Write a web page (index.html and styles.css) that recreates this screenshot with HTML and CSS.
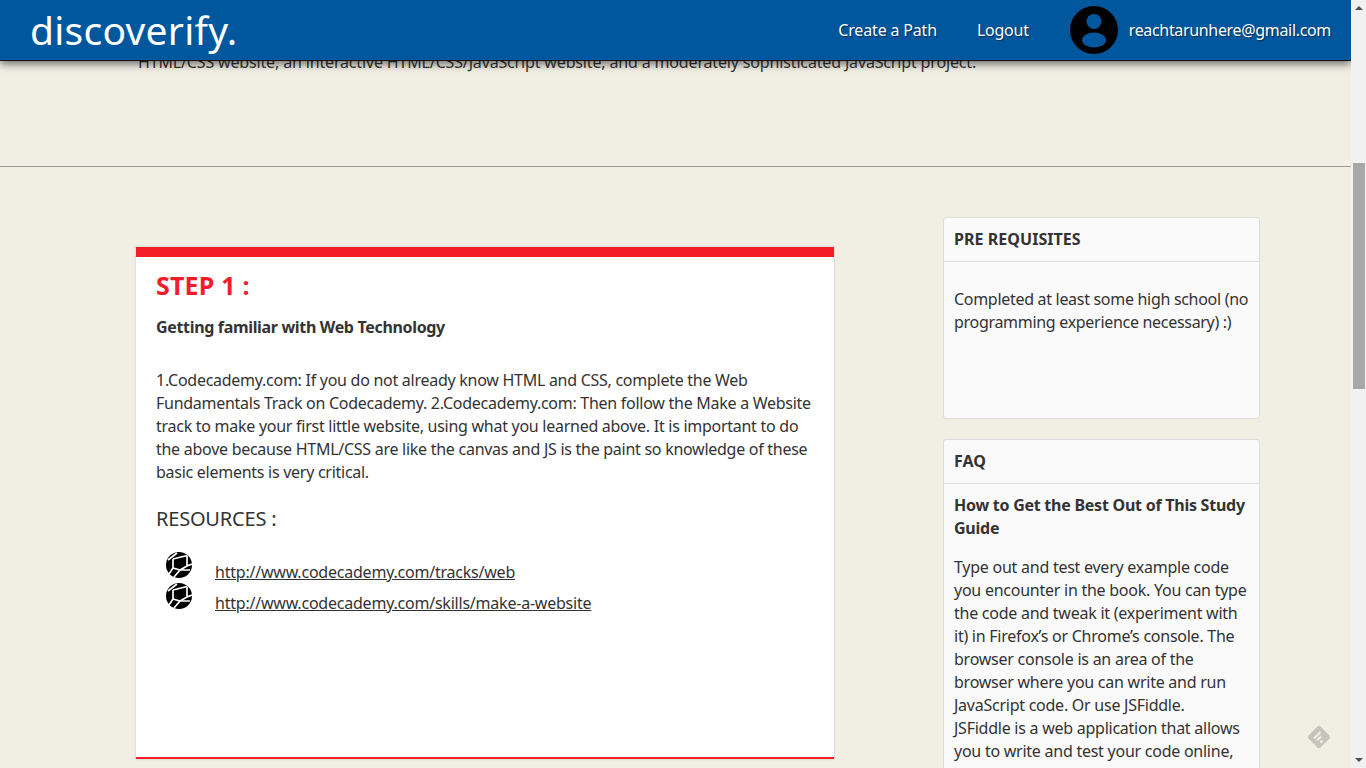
FILE: index.html
```html
<!DOCTYPE html>
<html lang="en">
<head>
<meta charset="utf-8">
<title>discoverify.</title>
<link rel="stylesheet" href="styles.css">
</head>
<body>
<div class="window">
  <div class="page">
    <header class="topbar">
      <a class="brand">discoverify.</a>
      <nav class="nav">
        <a class="nav-link nav-create">Create a Path</a>
        <a class="nav-link nav-logout">Logout</a>
        <span class="user">
          <svg class="avatar" viewBox="0 0 48 48"><circle cx="24" cy="24" r="24" fill="#000"/><circle cx="24" cy="15.500" r="7.500" fill="#00579e"/><ellipse cx="24" cy="34" rx="12" ry="7.500" fill="#00579e"/></svg>
          <span class="nav-link nav-email">reachtarunhere@gmail.com</span>
        </span>
      </nav>
    </header>

    <section class="intro">
      <p class="intro-text">HTML/CSS website, an interactive HTML/CSS/JavaScript website, and a moderately sophisticated JavaScript project.</p>
    </section>

    <div class="columns">
      <main class="step">
        <h2 class="step-title">STEP 1 :</h2>
        <h3 class="step-sub">Getting familiar with Web Technology</h3>
        <p class="step-body">1.Codecademy.com: If you do not already know HTML and CSS, complete the Web Fundamentals Track on Codecademy. 2.Codecademy.com: Then follow the Make a Website track to make your first little website, using what you learned above. It is important to do the above because HTML/CSS are like the canvas and JS is the paint so knowledge of these basic elements is very critical.</p>
        <h4 class="res-title">RESOURCES :</h4>
        <ul class="res-list">
          <li class="res-item">
            <svg class="globe" viewBox="0 0 26 26"><circle cx="13" cy="13" r="13" fill="#000"/><path d="M2 8 11 1M7 7 21 3.500M7 7 7 16 3 22M21 3.500 21 14M7 16 14 18 21 14 26 12M14 18 8 25M14 18 24 18" fill="none" stroke="#fff" stroke-width="1.700"/></svg>
            <a class="res-link">http://www.codecademy.com/tracks/web</a>
          </li>
          <li class="res-item">
            <svg class="globe" viewBox="0 0 26 26"><circle cx="13" cy="13" r="13" fill="#000"/><path d="M2 8 11 1M7 7 21 3.500M7 7 7 16 3 22M21 3.500 21 14M7 16 14 18 21 14 26 12M14 18 8 25M14 18 24 18" fill="none" stroke="#fff" stroke-width="1.700"/></svg>
            <a class="res-link">http://www.codecademy.com/skills/make-a-website</a>
          </li>
        </ul>
      </main>

      <aside class="side">
        <section class="panel panel-pre">
          <h3 class="panel-head">PRE REQUISITES</h3>
          <div class="panel-body pre-body">
            <p class="panel-text pre-text">Completed at least some high school (no<br>programming experience necessary) :)</p>
          </div>
        </section>
        <section class="panel panel-faq">
          <h3 class="panel-head">FAQ</h3>
          <div class="panel-body faq-body">
            <h4 class="faq-q">How to Get the Best Out of This Study Guide</h4>
            <p class="panel-text">Type out and test every example code<br>you encounter in the book. You can type<br>the code and tweak it (experiment with<br>it) in Firefox’s or Chrome’s console. The<br>browser console is an area of the<br>browser where you can write and run<br>JavaScript code. Or use JSFiddle.<br>JSFiddle is a web application that allows<br>you to write and test your code online,<br>right in your browser. You can tweak it</p>
          </div>
        </section>
      </aside>
    </div>

    <svg class="feedback" viewBox="0 0 26 26"><rect x="4.500" y="4.500" width="17" height="17" rx="2.500" transform="rotate(45 13 13)" fill="#c4c6bc"/><path d="M8 14.500 14.500 8M11 16.500 15 12.500" stroke="#f1efe4" stroke-width="2" fill="none"/><circle cx="15.500" cy="17.500" r="1.500" fill="#f1efe4"/></svg>
  </div>

  <div class="scrollbar">
    <span class="arrow arrow-up"></span>
    <div class="track"><div class="thumb"></div></div>
    <span class="arrow arrow-down"></span>
  </div>
</div>
</body>
</html>
```
FILE: styles.css
```css
* { box-sizing: border-box; }
html, body { margin: 0; height: 768px; overflow: hidden; }
body { font-family: "Noto Sans", "Open Sans", sans-serif; font-size: 16px; color: #333; background: #f1efe4; }

.window { display: flex; height: 768px; }
.page { position: relative; width: 1351px; height: 768px; overflow: hidden; background: #f1efe4; }

.topbar {
  position: absolute; top: 0; left: 0; right: 0; height: 60.500px;
  display: flex; align-items: center; justify-content: space-between;
  padding: 0 20px 0 30px;
  background: #00579e;
  border-bottom: 1px solid #111;
  box-shadow: 0 3px 8px rgba(0, 0, 0, .55);
  z-index: 2;
}
.brand { font-size: 39px; color: #fff; letter-spacing: .25px; line-height: 60px; }
.nav { display: flex; align-items: center; }
.nav-link { font-size: 16px; color: #fff; text-shadow: 1px 1px 1px rgba(0, 0, 0, .5); }
.nav-create { margin-right: 40px; letter-spacing: -.17px; }
.nav-logout { margin-right: 41px; letter-spacing: -.25px; }
.nav-email { letter-spacing: -.33px; }
.user { display: flex; align-items: center; gap: 11px; }
.avatar { width: 48px; height: 48px; display: block; }

.intro { height: 115px; padding: 51px 0 0 138px; }
.intro-text { margin: 0; font-size: 16px; line-height: 23px; letter-spacing: -.155px; white-space: nowrap; color: #333; }

.columns {
  display: flex; align-items: flex-start;
  margin-top: 51px; padding: 50px 0 0 136px;
  border-top: 1px solid #999;
}

.step {
  width: 698px; height: 512px; margin-top: 30px;
  padding: 13px 20px 0;
  background: #fff;
  border-top: 10px solid #f41c27;
  border-bottom: 2px solid #f41c27;
  box-shadow: 0 0 2px rgba(0, 0, 0, .2);
  flex: none;
}
.step-title { margin: 0; font-size: 25px; line-height: 30px; font-weight: 700; color: #f41c27; letter-spacing: .2px; }
.step-sub { margin: 16px 0 0; font-size: 16px; line-height: 23px; font-weight: 700; letter-spacing: -.33px; }
.step-body { margin: 30px 0 0; font-size: 16px; line-height: 23px; letter-spacing: -.27px; }
.res-title { margin: 22px 0 0; font-size: 20px; line-height: 26px; font-weight: 400; letter-spacing: -.2px; }
.res-list { list-style: none; margin: 19px 0 0; padding: 0 0 0 10px; }
.res-item { display: flex; height: 31px; }
.globe { width: 26px; height: 26px; flex: none; margin: 1px 23px 0 0; }
.res-link { font-size: 16px; line-height: 23px; margin-top: 10px; text-decoration: underline; letter-spacing: -.22px; }

.side { width: 317px; margin-left: 109px; display: flex; flex-direction: column; gap: 20px; flex: none; }
.panel { background: #fafafa; border: 1px solid #ddd; border-radius: 3px; }
.panel-head { margin: 0; height: 44px; padding: 0 10px; font-size: 16px; line-height: 42px; font-weight: 700; border-bottom: 1px solid #ddd; letter-spacing: .05px; }
.panel-body { padding: 0 10px; }
.pre-body { height: 156px; padding-top: 26px; }
.faq-body { padding-top: 10px; }
.faq-q { margin: 0; font-size: 16px; line-height: 23px; font-weight: 700; letter-spacing: -.25px; }
.panel-text { margin: 0; font-size: 16px; line-height: 23px; letter-spacing: -.25px; white-space: nowrap; }
.pre-text { letter-spacing: -.3px; }
.faq-q + .panel-text { margin-top: 16px; }

.feedback { position: absolute; left: 1306px; top: 724px; width: 26px; height: 26px; }

.scrollbar { width: 15px; height: 768px; background: #f1f1f1; display: flex; flex-direction: column; align-items: center; flex: none; }
.arrow { width: 0; height: 0; flex: none; border-left: 4px solid transparent; border-right: 4px solid transparent; }
.arrow-up { margin: 6px 0 5px; border-bottom: 4px solid #505050; }
.arrow-down { margin: 5px 0 6px; border-top: 4px solid #505050; }
.track { flex: 1; width: 100%; padding: 0 1px 0 2px; }
.thumb { margin-top: 148px; height: 226px; background: #a8a8a8; }
```
